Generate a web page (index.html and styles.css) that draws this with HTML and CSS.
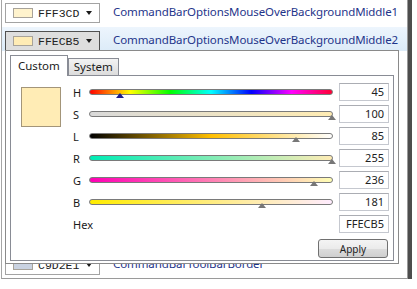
FILE: index.html
```html
<!DOCTYPE html>
<html lang="en">
<head>
    <meta charset="UTF-8">
    <title>Color Picker</title>
    <link rel="stylesheet" href="styles.css">
</head>
<body>
    <div class="shot">
        <div class="list">
            <div class="row">
                <div class="combo">
                    <span class="chip chip-fff3cd"></span>
                    <span class="code">FFF3CD</span>
                    <span class="arrow"></span>
                </div>
                <span class="name">CommandBarOptionsMouseOverBackgroundMiddle1</span>
            </div>
            <div class="row selected">
                <div class="combo open">
                    <span class="chip chip-ffecb5"></span>
                    <span class="code">FFECB5</span>
                    <span class="arrow"></span>
                </div>
                <span class="name">CommandBarOptionsMouseOverBackgroundMiddle2</span>
            </div>
            <div class="spacer"></div>
            <div class="row">
                <div class="combo">
                    <span class="chip chip-c9d2e1"></span>
                    <span class="code">C9D2E1</span>
                    <span class="arrow"></span>
                </div>
                <span class="name">CommandBarToolBarBorder</span>
            </div>
        </div>

        <div class="popup">
            <div class="tabs">
                <div class="tab active">Custom</div>
                <div class="tab">System</div>
            </div>
            <div class="panel">
                <div class="preview"></div>
                <div class="sliders">
                    <div class="slider-row">
                        <span class="label">H</span>
                        <div class="bar bar-h"><span class="thumb focus" style="left: 12.5%"></span></div>
                        <div class="value">45</div>
                    </div>
                    <div class="slider-row">
                        <span class="label">S</span>
                        <div class="bar bar-s"><span class="thumb" style="left: 100%"></span></div>
                        <div class="value">100</div>
                    </div>
                    <div class="slider-row">
                        <span class="label">L</span>
                        <div class="bar bar-l"><span class="thumb" style="left: 85%"></span></div>
                        <div class="value">85</div>
                    </div>
                    <div class="slider-row">
                        <span class="label">R</span>
                        <div class="bar bar-r"><span class="thumb" style="left: 100%"></span></div>
                        <div class="value">255</div>
                    </div>
                    <div class="slider-row">
                        <span class="label">G</span>
                        <div class="bar bar-g"><span class="thumb" style="left: 92.5%"></span></div>
                        <div class="value">236</div>
                    </div>
                    <div class="slider-row">
                        <span class="label">B</span>
                        <div class="bar bar-b"><span class="thumb" style="left: 71%"></span></div>
                        <div class="value">181</div>
                    </div>
                    <div class="slider-row">
                        <span class="label">Hex</span>
                        <div class="value">FFECB5</div>
                    </div>
                    <div class="actions">
                        <button class="apply">Apply</button>
                    </div>
                </div>
            </div>
        </div>
    </div>
</body>
</html>
```

FILE: styles.css
```css
body {
    margin: 0;
    padding: 0;
    background: white;
    font-family: "Noto Sans", sans-serif;
    font-size: 11px;
    color: #1a1a1a;
}

.shot {
    position: relative;
    box-sizing: border-box;
    width: 407px;
    height: 279px;
    margin-left: 1px;
    background: white;
    border-left: 1px solid #a6a6a6;
    border-right: 1px solid #9a9a9a;
    border-bottom: 1px solid #9a9a9a;
    box-shadow: 4px 0 0 #4d4d4d, 0 4px 0 #4d4d4d, 4px 4px 0 #4d4d4d;
    overflow: hidden;
}

.list {
    margin-top: -1px;
}

.row {
    display: flex;
    align-items: flex-start;
    box-sizing: border-box;
    height: 24px;
    padding: 4px 0 0 3px;
    margin-bottom: 4px;
}

.row.selected {
    background: linear-gradient(#edf5fd, #dcebf8);
}

.spacer {
    height: 196px;
}

.combo {
    display: flex;
    align-items: center;
    box-sizing: border-box;
    width: 95px;
    height: 20px;
    padding: 0 0 0 7px;
    border: 1px solid #a3a3a3;
    background: white;
}

.combo.open {
    border-color: #505050;
    background: #dedede;
}

.chip {
    box-sizing: border-box;
    width: 20px;
    height: 10px;
    border: 1px solid #a8a39a;
}

.chip-fff3cd { background: #fff3cd; }
.chip-ffecb5 { background: #ffecb5; }
.chip-c9d2e1 { background: #c9d2e1; }

.code {
    margin-left: 5px;
    font-family: "Liberation Mono", monospace;
    font-size: 11.5px;
    color: #222;
}

.arrow {
    margin-left: 7px;
    width: 0;
    height: 0;
    border-left: 3px solid transparent;
    border-right: 3px solid transparent;
    border-top: 4px solid #1a1a1a;
}

.name {
    margin-left: 13px;
    margin-top: 1px;
    font-size: 11.5px;
    letter-spacing: -0.1px;
    color: #1f358a;
    white-space: nowrap;
}

.popup {
    position: absolute;
    left: 3px;
    top: 50px;
    box-sizing: border-box;
    width: 394px;
    height: 214px;
    padding: 4px 3px 0 4px;
    background: white;
    border: 1px solid #8a8a8a;
}

.tabs {
    display: flex;
    align-items: flex-end;
    height: 20px;
}

.tab {
    box-sizing: border-box;
    height: 17px;
    padding: 0 5px;
    border: 1px solid #898c95;
    border-bottom: none;
    background: linear-gradient(#f3f3f3, #dcdcdc);
    font-size: 11.5px;
    line-height: 16px;
}

.tab.active {
    position: relative;
    z-index: 1;
    height: 21px;
    margin-bottom: -1px;
    padding: 0 7px;
    background: white;
    line-height: 19px;
}

.panel {
    display: flex;
    box-sizing: border-box;
    width: 384px;
    height: 186px;
    padding: 7px 4px 0 10px;
    border: 1px solid #898c95;
    background: white;
}

.preview {
    box-sizing: border-box;
    width: 40px;
    height: 40px;
    margin-top: 4px;
    margin-right: 12px;
    background: #ffecb5;
    border: 1px solid #a39579;
}

.sliders {
    display: flex;
    flex-direction: column;
    gap: 4px;
    flex: 1;
}

.slider-row {
    display: flex;
    align-items: center;
    height: 18px;
}

.label {
    width: 16px;
    font-size: 11px;
}

.bar {
    position: relative;
    box-sizing: border-box;
    width: 244px;
    height: 6px;
    border: 1px solid #7a7a7a;
    border-radius: 3px;
}

.bar-h { background: linear-gradient(to right, #ff0000, #ffff00 16.7%, #00ff00 33.3%, #00ffff 50%, #0000ff 66.7%, #ff00ff 83.3%, #ff0033); }
.bar-s { background: linear-gradient(to right, #d9d9d9, #ffecb3); }
.bar-l { background: linear-gradient(to right, #000000, #ffbf00 50%, #ffffff); }
.bar-r { background: linear-gradient(to right, #00ecb5, #ffecb5); }
.bar-g { background: linear-gradient(to right, #ff00b5, #ffffb5); }
.bar-b { background: linear-gradient(to right, #ffec00, #ffecff); }

.thumb {
    position: absolute;
    top: 3px;
    width: 0;
    height: 0;
    margin-left: -4px;
    border-left: 4px solid transparent;
    border-right: 4px solid transparent;
    border-bottom: 5px solid #777;
}

.thumb.focus {
    border-bottom-color: #1c1c8c;
}

.value {
    box-sizing: border-box;
    width: 50px;
    height: 18px;
    margin-left: auto;
    padding-right: 4px;
    border: 1px solid #c5c8cf;
    border-top-color: #abadb3;
    font-size: 11px;
    line-height: 16px;
    text-align: right;
    color: #222;
}

.actions {
    display: flex;
    justify-content: flex-end;
    margin-top: 2px;
    padding-right: 1px;
}

.apply {
    box-sizing: border-box;
    width: 70px;
    height: 19px;
    padding: 0;
    border: 1px solid #707070;
    border-radius: 3px;
    background: linear-gradient(#f4f4f4, #ebebeb 50%, #dddddd 50%, #cfcfcf);
    font-family: "Noto Sans", sans-serif;
    font-size: 10px;
    color: #222;
}
```
